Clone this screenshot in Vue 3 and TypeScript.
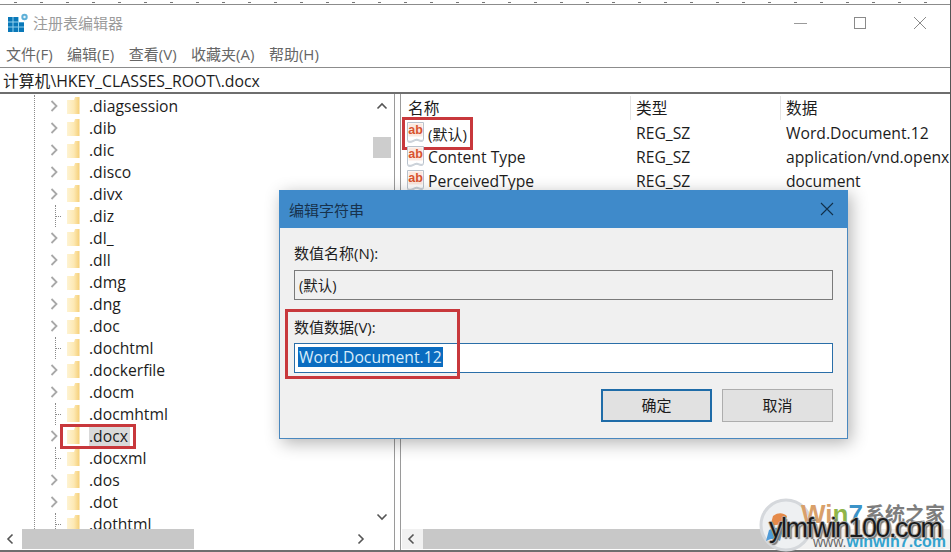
<script setup lang="ts">
interface TreeRow { name: string; leaf: boolean; selected?: boolean }
const names: [string, boolean][] = [
  ['.diagsession', false], ['.dib', false], ['.dic', false], ['.disco', false], ['.divx', false],
  ['.diz', true], ['.dl_', false], ['.dll', false], ['.dmg', false], ['.dng', false],
  ['.doc', false], ['.dochtml', true], ['.dockerfile', false], ['.docm', false], ['.docmhtml', true],
  ['.docx', false], ['.docxml', true], ['.dos', false], ['.dot', false], ['.dothtml', true],
]
const rows: TreeRow[] = names.map(([name, leaf]) => ({ name, leaf, selected: name === '.docx' }))
const menus = ['文件(F)', '编辑(E)', '查看(V)', '收藏夹(A)', '帮助(H)']
const values = [
  { name: '(默认)', type: 'REG_SZ', data: 'Word.Document.12', mark: true },
  { name: 'Content Type', type: 'REG_SZ', data: 'application/vnd.openxmlformats-officedocument', mark: false },
  { name: 'PerceivedType', type: 'REG_SZ', data: 'document', mark: false },
]
</script>

<template>
  <div class="window">
    <div class="top-edge"></div>
    <header class="titlebar">
      <svg class="app-icon" width="22" height="22" viewBox="0 0 22 22">
        <rect x="1" y="5" width="16" height="15" fill="#0a78b8" />
        <path d="M6 5v15M11.500 5v15M1 10h16M1 15h16" stroke="#8fd0ee" stroke-width="1" />
        <rect x="12" y="5" width="5" height="5" fill="#fff" />
        <circle cx="17.500" cy="5" r="3.200" fill="#5eb0d8" />
        <circle cx="17.500" cy="5" r="1.200" fill="#e8f4fa" />
      </svg>
      <span class="title">注册表编辑器</span>
      <div class="controls">
        <svg width="14" height="14" viewBox="0 0 14 14"><path d="M1 7.500h13" stroke="#9a9a9a" /></svg>
        <svg width="14" height="14" viewBox="0 0 14 14"><rect x="1.500" y="1.500" width="11" height="11" fill="none" stroke="#8a8a8a" /></svg>
        <svg width="14" height="14" viewBox="0 0 14 14"><path d="M1 1l12 12M13 1L1 13" stroke="#8a8a8a" /></svg>
      </div>
    </header>
    <nav class="menubar">
      <span v-for="m in menus" :key="m">{{ m }}</span>
    </nav>
    <div class="address">计算机\HKEY_CLASSES_ROOT\.docx</div>

    <main class="panes">
      <section class="pane left">
        <div class="pane-body">
          <div class="tree">
            <div class="guide">
              <div v-for="r in rows" :key="r.name" class="row" :class="{ selected: r.selected }">
                <span v-if="r.leaf" class="leaf"></span>
                <svg v-else class="chev" width="10" height="14" viewBox="0 0 10 14">
                  <path d="M1.500 2l5 5-5 5" fill="none" stroke="#a8a8a8" stroke-width="1.800" />
                </svg>
                <svg class="folder" width="13" height="18" viewBox="0 0 13 18">
                  <defs>
                    <linearGradient id="fold" x1="0" x2="1" y1="0" y2="0">
                      <stop offset="0" stop-color="#fef3d2" />
                      <stop offset="0.55" stop-color="#fde9b4" />
                      <stop offset="1" stop-color="#f5cf78" />
                    </linearGradient>
                  </defs>
                  <path d="M0 3h7l1-3h4.500v17H0z" fill="url(#fold)" />
                </svg>
                <span class="label">{{ r.name }}</span>
                <i v-if="r.selected" class="mark mark-tree"></i>
              </div>
            </div>
          </div>
          <div class="vbar">
            <svg class="arrow" width="12" height="8" viewBox="0 0 12 8"><path d="M1.500 6.500L6 2l4.500 4.500" fill="none" stroke="#555" stroke-width="1.600" /></svg>
            <div class="vthumb"></div>
            <svg class="arrow down" width="12" height="8" viewBox="0 0 12 8"><path d="M1.500 1.500L6 6l4.500-4.500" fill="none" stroke="#555" stroke-width="1.600" /></svg>
          </div>
        </div>
        <div class="hbar">
          <svg class="harrow" width="10" height="12" viewBox="0 0 10 12"><path d="M7.500 1.500L3 6l4.500 4.500" fill="none" stroke="#555" stroke-width="1.600" /></svg>
          <div class="track"><div class="hthumb left-thumb"></div></div>
          <svg class="harrow" width="10" height="12" viewBox="0 0 10 12"><path d="M2.500 1.500L7 6l-4.500 4.500" fill="none" stroke="#555" stroke-width="1.600" /></svg>
        </div>
      </section>

      <section class="pane right">
        <div class="pane-body list">
          <div class="list-head">
            <span class="c1">名称</span><span class="c2">类型</span><span class="c3">数据</span>
          </div>
          <div v-for="v in values" :key="v.name" class="list-row">
            <span class="c1 name-cell">
              <svg class="ab" width="22" height="24" viewBox="0 0 22 24">
                <path d="M2.500 1.500h16v17c-3 2.500-5-1-8 0s-5 3-8 1z" fill="#fff" stroke="#b9c2cc" />
                <path d="M2.500 20.500c3 2 5 0 8-1s5 2.500 8 0" fill="none" stroke="#b9c2cc" />
                <rect x="3.500" y="2.500" width="14" height="13" fill="#fbe8df" />
                <text x="10.500" y="13" text-anchor="middle" class="ab-text">ab</text>
              </svg>
              <span :class="{ cjk: v.mark }">{{ v.name }}</span>
            </span>
            <span class="c2">{{ v.type }}</span>
            <span class="c3">{{ v.data }}</span>
            <i v-if="v.mark" class="mark mark-list"></i>
          </div>
        </div>
        <div class="hbar">
          <svg class="harrow" width="10" height="12" viewBox="0 0 10 12"><path d="M7.500 1.500L3 6l4.500 4.500" fill="none" stroke="#555" stroke-width="1.600" /></svg>
          <div class="track"><div class="hthumb right-thumb"></div></div>
        </div>
      </section>
    </main>

    <div class="dialog">
      <div class="dlg-title">
        <span>编辑字符串</span>
        <svg width="14" height="14" viewBox="0 0 14 14"><path d="M1 1l12 12M13 1L1 13" stroke="#12304a" stroke-width="1.100" /></svg>
      </div>
      <div class="dlg-body">
        <label class="field-label first">数值名称(N):</label>
        <div class="input readonly">(默认)</div>
        <div class="field-mark">
          <label class="field-label second">数值数据(V):</label>
          <div class="input active"><span class="sel">Word.Document.12</span></div>
          <i class="mark mark-field"></i>
        </div>
        <div class="buttons">
          <button class="btn primary">确定</button>
          <button class="btn">取消</button>
        </div>
      </div>
    </div>

    <div class="watermark">
      <svg class="wm-logo" width="50" height="56" viewBox="0 0 50 56">
        <circle cx="27" cy="29" r="25" fill="#eef0f2" stroke="#d5d8dc" stroke-width="3" />
        <path d="M14 20c6-4 10-3 14 0l-3 11c-4-3-8-3-14 0z" fill="#e58a4a" />
        <path d="M10 34c6-3 10-3 14 0l-3 11c-4-3-8-3-14 0z" fill="#4f9bd8" />
      </svg>
      <div class="wm-back">
        <span class="wm-win"><b class="o">Wi</b><b class="g">n</b><b class="b">7</b><span class="wm-cn">系统之家</span></span>
        <span class="wm-url"><span class="wm-www">www.</span>winwin7.com</span>
      </div>
      <span class="wm-front">ylmfwin100.com</span>
    </div>
  </div>
</template>

<style>
html, body { margin: 0; background: #fff; }
</style>

<style scoped>
.window {
  width: 951px;
  height: 552px;
  overflow: hidden;
  position: relative;
  display: flex;
  flex-direction: column;
  box-sizing: border-box;
  border-right: 1px solid #555;
  background: #fff;
  color: #1c1c1c;
  font-family: "Open Sans", "Noto Sans CJK SC", sans-serif;
  font-size: 15.700px;
}
.top-edge {
  height: 5px;
  flex: none;
  box-sizing: border-box;
  border-bottom: 1px solid #8c8c8c;
  background: repeating-linear-gradient(90deg, #fff 0 14px, #777 14px 17px, #fff 17px 26px) 0 2px / 100% 1px no-repeat;
}
.titlebar {
  height: 35px;
  flex: none;
  display: flex;
  align-items: center;
  padding-left: 7px;
}
.app-icon { flex: none; }
.title { margin-left: 4px; color: #9b9b9b; font-size: 15px; }
.controls {
  margin-left: auto;
  display: flex;
  gap: 46px;
  padding-right: 23px;
}
.menubar {
  height: 28px;
  flex: none;
  box-sizing: border-box;
  border-bottom: 1px solid #8c8c8c;
  display: flex;
  align-items: center;
  gap: 14.500px;
  padding-left: 6px;
  color: #666;
  font-size: 15px;
}
.address {
  height: 26px;
  flex: none;
  box-sizing: border-box;
  border-bottom: 2px solid #6e6e6e;
  display: flex;
  align-items: center;
  padding-left: 3px;
  font-size: 15.800px;
}
.panes {
  flex: 1;
  min-height: 0;
  display: flex;
  gap: 5px;
  border-bottom: 2px solid #6e6e6e;
}
.pane { display: flex; flex-direction: column; min-width: 0; }
.left { width: 395px; flex: none; border-right: 1px solid #9a9a9a; box-sizing: border-box; }
.right { flex: 1; border-left: 1px solid #9a9a9a; }
.pane-body { flex: 1; min-height: 0; overflow: hidden; }
.left .pane-body { display: flex; }
.tree { width: 373px; flex: none; overflow: hidden; padding: 1px 0 0 34px; box-sizing: border-box; }
.guide { border-left: 1px dotted #8a8a8a; }
.row {
  position: relative;
  height: 22px;
  display: flex;
  align-items: center;
  padding-left: 15px;
}
.chev { flex: none; margin-right: 7px; }
.leaf {
  flex: none;
  width: 7px;
  height: 22px;
  margin: 0 5px 0 5px;
  box-sizing: border-box;
  border-left: 1px dotted #8a8a8a;
  background:
    repeating-linear-gradient(90deg, #8a8a8a 0 1px, transparent 1px 2px) 0 11px / 100% 1px no-repeat;
}
.folder { flex: none; }
.label { margin-left: 9px; white-space: nowrap; }
.selected .label { background: #d9d9d9; padding-right: 2px; }
.mark { position: absolute; border: 3px solid #c8383c; box-sizing: border-box; pointer-events: none; }
.mark-tree { left: 25px; top: -1px; width: 76px; height: 25px; }
.mark-list { left: 1px; top: -4px; width: 71px; height: 33px; }
.mark-field { left: -9px; top: -8px; width: 175px; height: 70px; }
.vbar {
  width: 18px;
  flex: none;
  display: flex;
  flex-direction: column;
  align-items: center;
  padding-top: 8px;
  box-sizing: border-box;
}
.vthumb { width: 18px; height: 21px; background: #cdcdcd; margin-top: 27px; flex: none; }
.arrow { flex: none; }
.arrow.down { margin-top: auto; margin-bottom: 8px; }
.hbar {
  height: 20px;
  flex: none;
  display: flex;
  align-items: center;
  padding: 0 5px;
  gap: 7px;
  margin-bottom: 1px;
}
.harrow { flex: none; }
.track { flex: 1; height: 100%; }
.hthumb { height: 100%; background: #c8c8c8; }
.left-thumb { width: 172px; }
.left .hbar { padding-right: 28px; }
.right-thumb { width: 373px; }
.right .hbar { background: #f1f1f1; margin-left: 1px; padding-left: 4px; padding-right: 0; }
.right .track { background: #f1f1f1; }
.list-head, .list-row { display: flex; white-space: nowrap; position: relative; }
.list-head { height: 26px; align-items: center; padding-top: 1px; box-sizing: border-box; }
.list-row { height: 24px; align-items: center; top: 1px; }
.c1 { width: 229px; flex: none; padding-left: 7px; box-sizing: border-box; }
.c2 { width: 150px; flex: none; padding-left: 6px; box-sizing: border-box; }
.c3 { flex: 1; padding-left: 6px; overflow: hidden; }
.list-head .c2, .list-head .c3 { border-left: 1px solid #e4e4e4; height: 24px; line-height: 24px; }
.list-head .c2 { padding-left: 5px; }
.list-head .c3 { padding-left: 5px; }
.name-cell { display: flex; align-items: center; gap: 1px; padding-left: 4px; }
.cjk { font-size: 15px; }
.ab { flex: none; }
.ab-text { font: 700 12.500px "Liberation Sans", sans-serif; fill: #d8532f; }

.dialog {
  position: absolute;
  left: 279px;
  top: 190px;
  width: 569px;
  height: 249px;
  box-sizing: border-box;
  border: 1px solid #4a88bf;
  border-top: 0;
  background: #f0f0f0;
  box-shadow: 3px 4px 16px rgba(0, 0, 0, 0.3);
  font-size: 15px;
}
.dlg-title {
  height: 38px;
  background: #3f8aca;
  color: #17324d;
  display: flex;
  align-items: center;
  justify-content: space-between;
  padding: 0 14px 0 10px;
  font-size: 15px;
  margin: 0 -1px;
}
.dlg-body { padding: 0 14px; }
.field-label { display: block; line-height: 20px; }
.first { padding-top: 15px; margin-bottom: 7px; }
.input {
  height: 30px;
  box-sizing: border-box;
  border: 1px solid #7a7a7a;
  display: flex;
  align-items: center;
  padding-left: 3px;
  font-size: 14.500px;
  padding-bottom: 2px;
}
.readonly { margin-bottom: 17px; padding-left: 4px; }
.field-mark { position: relative; }
.second { margin-bottom: 6px; }
.active { background: #fff; border-color: #2a6ea8; font-size: 15.700px; }
.sel { background: #0a6cc0; color: #d8ecfb; line-height: 20px; padding: 0 1px; }
.buttons { display: flex; justify-content: flex-end; gap: 10px; margin-top: 16px; }
.btn {
  width: 111px;
  height: 33px;
  box-sizing: border-box;
  border: 1px solid #adadad;
  background: #e1e1e1;
  font: inherit;
  color: #1c1c1c;
  padding: 0 0 3px;
}
.primary { border: 2px solid #1f6ca8; }

.watermark {
  position: absolute;
  right: 0;
  bottom: 0;
  width: 191px;
  height: 57px;
  overflow: hidden;
  font-family: "Liberation Sans", sans-serif;
}
.wm-logo { position: absolute; left: 0; top: 1px; }
.wm-back { position: absolute; left: 42px; top: 6px; width: 149px; display: flex; flex-direction: column; }
.wm-win { display: flex; align-items: center; font-size: 26px; line-height: 26px; white-space: nowrap; }
.o { color: #d9a06a; }
.g { color: #8fb54a; }
.b { color: #3c93c8; margin-right: 2px; }
.wm-cn { font-family: "Noto Sans CJK SC", sans-serif; font-size: 20px; color: #7d7d7d; font-weight: 700; }
.wm-url { position: relative; top: 7px; margin-left: 12px; font-size: 16px; font-weight: 700; line-height: 16px; color: #33a3cf; white-space: nowrap; }
.wm-www { color: #666; font-size: 14px; font-weight: 400; }
.wm-front {
  position: absolute;
  left: 10px;
  top: 17px;
  font-size: 27px;
  line-height: 32px;
  letter-spacing: -1.500px;
  color: #1a1a1a;
  white-space: nowrap;
  text-shadow: 1px 0 0 #aaa, -1px 0 0 #aaa, 0 1px 0 #aaa, 0 -1px 0 #aaa, 2px 2px 1px #777;
}
</style>
